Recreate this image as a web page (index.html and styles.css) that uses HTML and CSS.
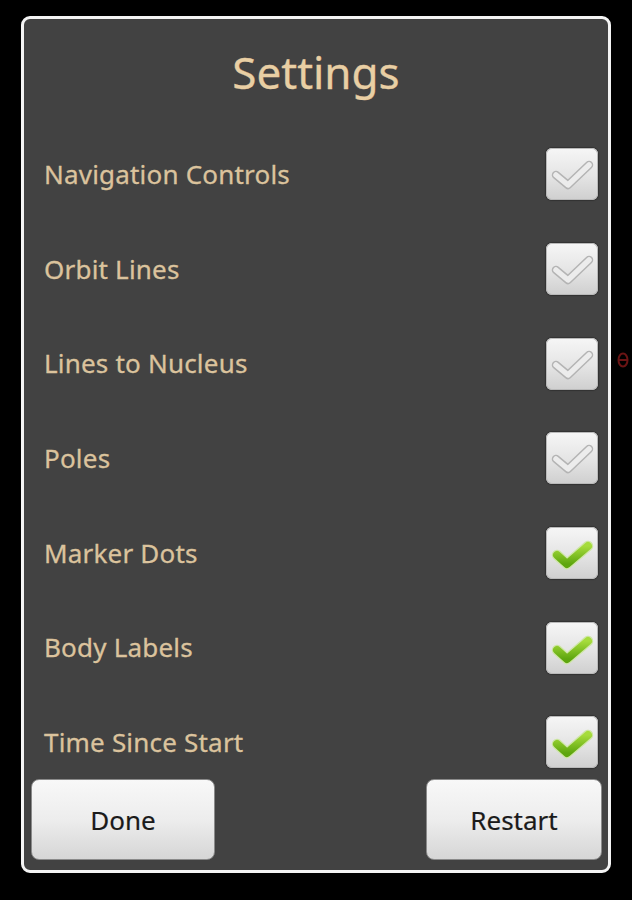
FILE: index.html
```html
<!DOCTYPE html>
<html>
<head>
<meta charset="utf-8">
<link rel="stylesheet" href="styles.css">
</head>
<body>
<div class="dialog">
  <h1 class="title">Settings</h1>
  <div class="list">
    <div class="row"><span class="label">Navigation Controls</span><span class="box"><svg viewBox="0 0 52 52"><path class="ghost-o" d="M10 27 L22 37 L43 17"/><path class="ghost-i" d="M10 27 L22 37 L43 17"/></svg></span></div>
    <div class="row"><span class="label">Orbit Lines</span><span class="box"><svg viewBox="0 0 52 52"><path class="ghost-o" d="M10 27 L22 37 L43 17"/><path class="ghost-i" d="M10 27 L22 37 L43 17"/></svg></span></div>
    <div class="row"><span class="label">Lines to Nucleus</span><span class="box"><svg viewBox="0 0 52 52"><path class="ghost-o" d="M10 27 L22 37 L43 17"/><path class="ghost-i" d="M10 27 L22 37 L43 17"/></svg></span></div>
    <div class="row"><span class="label">Poles</span><span class="box"><svg viewBox="0 0 52 52"><path class="ghost-o" d="M10 27 L22 37 L43 17"/><path class="ghost-i" d="M10 27 L22 37 L43 17"/></svg></span></div>
    <div class="row"><span class="label">Marker Dots</span><span class="box"><svg viewBox="0 0 52 52"><defs><linearGradient id="g1" x1="0" y1="0" x2="0" y2="1"><stop offset="0" stop-color="#a6dc3c"/><stop offset="1" stop-color="#5ea60e"/></linearGradient></defs><path class="green-o" d="M11 28 L21 37 L42 19"/><path class="green-i" stroke="url(#g1)" d="M11 28 L21 37 L42 19"/></svg></span></div>
    <div class="row"><span class="label">Body Labels</span><span class="box"><svg viewBox="0 0 52 52"><path class="green-o" d="M11 28 L21 37 L42 19"/><path class="green-i" stroke="url(#g1)" d="M11 28 L21 37 L42 19"/></svg></span></div>
    <div class="row"><span class="label">Time Since Start</span><span class="box"><svg viewBox="0 0 52 52"><path class="green-o" d="M11 28 L21 37 L42 19"/><path class="green-i" stroke="url(#g1)" d="M11 28 L21 37 L42 19"/></svg></span></div>
  </div>
  <div class="buttons">
    <button class="btn btn-done">Done</button>
    <button class="btn btn-restart">Restart</button>
  </div>
</div>
<svg class="side-mark" viewBox="0 0 12 18"><ellipse cx="6" cy="9" rx="4.5" ry="6.5" fill="none" stroke="#6a1414" stroke-width="2"/><line x1="1.5" y1="9" x2="10.5" y2="9" stroke="#6a1414" stroke-width="2"/></svg>
</body>
</html>
```

FILE: styles.css
```css
html, body {
  margin: 0;
  padding: 0;
  background: #000;
}
body {
  width: 632px;
  height: 900px;
  position: relative;
  font-family: "Noto Sans", "Open Sans", "DejaVu Sans", sans-serif;
}
.dialog {
  position: absolute;
  left: 21px;
  top: 16px;
  width: 584px;
  height: 851px;
  border: 3px solid #f4f4f4;
  border-radius: 9px;
  background: #424242;
  display: flex;
  flex-direction: column;
  overflow: hidden;
}
.title {
  margin: 0;
  height: 108px;
  display: flex;
  align-items: center;
  justify-content: center;
  font-weight: normal;
  font-size: 44px;
  color: #e9cfa4;
  -webkit-text-stroke: 0.3px #e9cfa4;
  padding-bottom: 2px;
  box-sizing: border-box;
}
.list {
  flex: 1;
  overflow: hidden;
}
.row {
  height: 94.7px;
  display: flex;
  align-items: center;
  justify-content: space-between;
  padding: 0 10px 0 20px;
}
.label {
  font-size: 26px;
  letter-spacing: 0.2px;
  color: #dbc39d;
  -webkit-text-stroke: 0.3px #dbc39d;
  padding-bottom: 1px;
}
.box {
  width: 52px;
  height: 52px;
  border-radius: 6px;
  box-sizing: border-box;
  background: linear-gradient(#f6f6f6, #e4e4e4 55%, #cfcfcf);
  box-shadow: inset 0 0 0 1px #b9b9b9, 0 0 1px 1px rgba(0,0,0,0.25);
  display: block;
}
.box svg {
  width: 52px;
  height: 52px;
  display: block;
}
.ghost-o {
  fill: none;
  stroke: #b4b4b4;
  stroke-width: 8.5;
  stroke-linecap: round;
  stroke-linejoin: round;
}
.ghost-i {
  fill: none;
  stroke: #ececec;
  stroke-width: 5.5;
  stroke-linecap: round;
  stroke-linejoin: round;
}
.green-o {
  fill: none;
  stroke: #cfe6a8;
  stroke-width: 10.5;
  stroke-linecap: round;
  stroke-linejoin: round;
}
.green-i {
  fill: none;
  stroke-width: 8;
  stroke-linecap: round;
  stroke-linejoin: round;
}
.buttons {
  display: flex;
  justify-content: space-between;
  padding: 4px 6px 10px 7px;
}
.btn {
  height: 81px;
  border: 1px solid #8a8a8a;
  border-radius: 8px;
  background: linear-gradient(#f8f8f8, #ededed 50%, #d6d6d6);
  font-family: "Noto Sans", "Open Sans", "DejaVu Sans", sans-serif;
  font-size: 26px;
  color: #1a1a1a;
  -webkit-text-stroke: 0.2px #1a1a1a;
  padding: 0;
}
.btn-done {
  width: 184px;
}
.btn-restart {
  width: 176px;
}
.side-mark {
  position: absolute;
  left: 617px;
  top: 351px;
  width: 12px;
  height: 18px;
}
```
